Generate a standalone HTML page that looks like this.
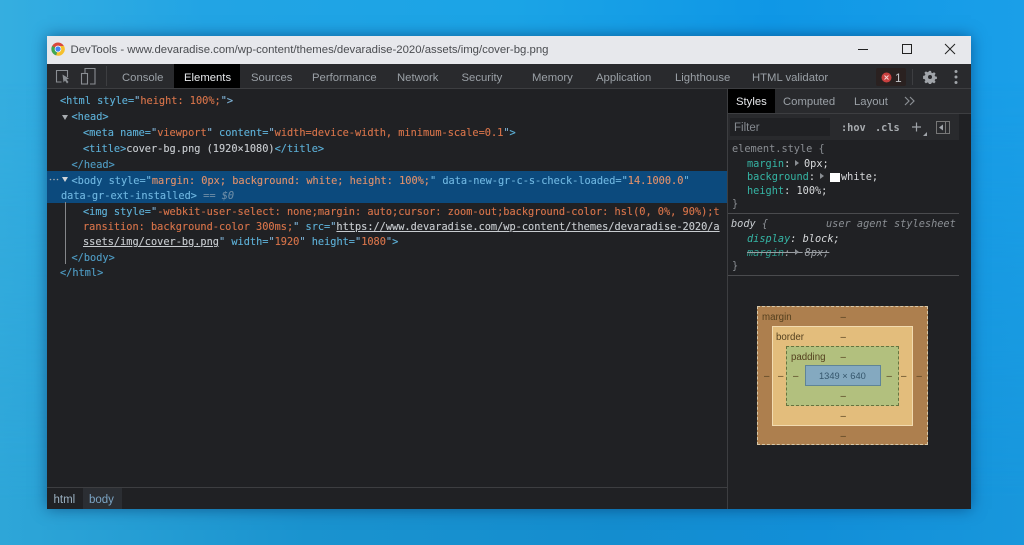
<!DOCTYPE html>
<html><head><meta charset="utf-8"><style>
*{box-sizing:border-box}
html,body{margin:0;padding:0;width:1024px;height:545px;overflow:hidden}
body{position:relative;background:linear-gradient(90deg,#35aee0 0%,#22a4e4 20%,#1ba4e6 50%,#0f97e6 75%,#1a9fe8 100%)}
#bot{position:absolute;left:0;top:0;width:1024px;height:545px;background:linear-gradient(90deg,#2ea6d8 0%,#1a93cf 30%,#148dcf 60%,#128fd8 80%,#1897dc 100%);-webkit-mask-image:linear-gradient(180deg,transparent 15%,#000 92%);mask-image:linear-gradient(180deg,transparent 15%,#000 92%)}
#win{position:absolute;left:47px;top:36px;width:924px;height:473px;background:#202124;box-shadow:0 0 14px rgba(0,40,90,.55);overflow:hidden}
.a{position:absolute;white-space:pre}
#tb{position:absolute;left:0;top:0;width:924px;height:28px;background:#e7e8ec}
#tbar{position:absolute;left:0;top:28px;width:924px;height:25px;background:#292a2d;border-bottom:1px solid #3d3e41}
.t{position:absolute;font:11.3px "Liberation Sans",sans-serif;color:#9aa0a6;white-space:pre;top:34.5px;line-height:14px}
.c{position:absolute;left:0;font:10.27px/14px "DejaVu Sans Mono",monospace;white-space:pre;color:#5db0d7;filter:blur(.25px);-webkit-text-stroke:.12px currentColor}
.o{color:#d8744a}.g{color:#9aa0a6}.b{color:#c8ccd0}.l{color:#7fb2d6}
.s{position:absolute;font:10.27px/13px "DejaVu Sans Mono",monospace;white-space:pre;color:#d8dadc;filter:blur(.2px)}
.k{color:#35b5a5}
.bm{position:absolute;font:9.7px/11px "Liberation Sans",sans-serif;color:#54401f;white-space:pre}
</style></head><body>
<div id="bot"></div>
<div id="win">
<div id="tb"></div>
<svg class="a" style="left:4px;top:6px" width="14" height="14" viewBox="0 0 16 16"><circle cx="8" cy="8" r="7.5" fill="#d9483b"/><path d="M8 8L1.3 4.500A7.500 7.500 0 0 0 6 15.300Z" fill="#3ea853"/><path d="M8 8L6 15.300A7.500 7.500 0 0 0 14.800 4.500H8Z" fill="#f5c02c"/><circle cx="8" cy="8" r="3.800" fill="#fff"/><circle cx="8" cy="8" r="3" fill="#4285f4"/></svg>
<div class="a" style="left:23.500px;top:7px;font:11.370px/15px 'Liberation Sans',sans-serif;color:#4a4c50">DevTools - www.devaradise.com/wp-content/themes/devaradise-2020/assets/img/cover-bg.png</div>
<svg class="a" style="left:810px;top:4px" width="105" height="20" fill="none" stroke="#222" stroke-width="1"><path d="M1 9.500H11"/><rect x="45.500" y="4.500" width="9" height="9"/><path d="M88 4L98 14M98 4L88 14"/></svg>
<div id="tbar"></div>
<svg class="a" style="left:8px;top:32px" width="42" height="18" fill="none" stroke="#8a8e93" stroke-width="1.100"><path d="M12.500 9V2.500H1.500V14H6.500"/><path d="M7.500 6.500L14 10.500L11.500 11.500L13.500 14L12 15.500L10 12.500L8.500 14.500Z" fill="#8a8e93" stroke="none"/><rect x="26.500" y="5.500" width="6" height="10.500"/><path d="M30 5V.5H40V16H35"/></svg>
<div class="a" style="left:59px;top:30px;width:1px;height:20px;background:#3d3e41"></div>
<div class="a" style="left:127px;top:28px;width:66px;height:24px;background:#000"></div>
<div class="t" style="left:75px">Console</div>
<div class="t" style="left:137px;color:#e8eaed">Elements</div>
<div class="t" style="left:204px">Sources</div>
<div class="t" style="left:265px">Performance</div>
<div class="t" style="left:350px">Network</div>
<div class="t" style="left:414.500px">Security</div>
<div class="t" style="left:485px">Memory</div>
<div class="t" style="left:549px">Application</div>
<div class="t" style="left:628px">Lighthouse</div>
<div class="t" style="left:705px">HTML validator</div>
<div class="a" style="left:829px;top:32px;width:30px;height:18px;background:#2a2120;border-radius:2px"></div>
<svg class="a" style="left:834px;top:35.500px" width="11" height="11"><circle cx="5.500" cy="5.500" r="5" fill="#c9403f"/><path d="M3.500 3.500L7.500 7.500M7.500 3.500L3.500 7.500" stroke="#f5d5d5" stroke-width="1"/></svg>
<div class="t" style="left:848px;color:#c4c7cb;font-size:12px">1</div>
<div class="a" style="left:865px;top:33px;width:1px;height:16px;background:#3d3e41"></div>
<svg class="a" style="left:876px;top:33.500px" width="14" height="14" viewBox="0 0 16 16"><path d="M6.800 1h2.400l.4 2 1.300.6 1.800-1.100 1.700 1.700-1.100 1.800.6 1.300 2 .4v2.400l-2 .4-.6 1.300 1.100 1.800-1.700 1.700-1.800-1.100-1.300.6-.4 2H6.800l-.4-2-1.300-.6-1.800 1.100-1.700-1.700 1.100-1.800-.6-1.300-2-.4V6.700l2-.4.6-1.300-1.100-1.800 1.700-1.700 1.800 1.100 1.300-.6z" fill="#a0a4a9"/><circle cx="8" cy="8" r="2.300" fill="#292a2d"/></svg>
<svg class="a" style="left:906px;top:33px" width="6" height="16" fill="#a0a4a9"><circle cx="3" cy="2.500" r="1.500"/><circle cx="3" cy="8" r="1.500"/><circle cx="3" cy="13.500" r="1.500"/></svg>

<div class="a" style="left:0;top:135px;width:680px;height:32px;background:#0c4a7d"></div>
<div class="a" style="left:18px;top:166px;width:1px;height:62px;background:#85878a"></div>
<div class="c" style="top:58px;left:13px"><span>&lt;html style=</span><span class="l">"</span><span class="o">height: 100%;</span><span class="l">"&gt;</span></div>
<div class="c" style="top:74px;left:24.500px">&lt;head&gt;</div>
<div class="c" style="top:90px;left:36px">&lt;meta name=<span class="l">"</span><span class="o">viewport</span><span class="l">"</span> content=<span class="l">"</span><span class="o">width=device-width, minimum-scale=0.1</span><span class="l">"</span>&gt;</div>
<div class="c" style="top:106px;left:36px">&lt;title&gt;<span class="b">cover-bg.png (1920×1080)</span>&lt;/title&gt;</div>
<div class="c" style="top:122px;left:24.500px;color:#4f9cc4">&lt;/head&gt;</div>
<div class="c" style="top:138px;left:24.500px;color:#6fb6e0">&lt;body style=<span>"</span><span style="color:#e0906a">margin: 0px; background: white; height: 100%;</span>" data-new-gr-c-s-check-loaded="<span style="color:#e0906a">14.1000.0</span>"</div>
<div class="c" style="top:153px;left:14px;color:#6fb6e0">data-gr-ext-installed&gt; <span style="color:#6c8ca6">== <i>$0</i></span></div>
<div class="c" style="top:169px;left:36px">&lt;img style=<span class="l">"</span><span class="o">-webkit-user-select: none;margin: auto;cursor: zoom-out;background-color: hsl(0, 0%, 90%);t</span></div>
<div class="c" style="top:184px;left:36px"><span class="o">ransition: background-color 300ms;</span><span class="l">"</span> src=<span class="l">"</span><span class="b" style="text-decoration:underline">https://www.devaradise.com/wp-content/themes/devaradise-2020/a</span></div>
<div class="c" style="top:199px;left:36px"><span class="b" style="text-decoration:underline">ssets/img/cover-bg.png</span><span class="l">"</span> width=<span class="l">"</span><span class="o">1920</span><span class="l">"</span> height=<span class="l">"</span><span class="o">1080</span><span class="l">"</span>&gt;</div>
<div class="c" style="top:215px;left:24.500px;color:#4f9cc4">&lt;/body&gt;</div>
<div class="c" style="top:230px;left:13px;color:#4f9cc4">&lt;/html&gt;</div>
<svg class="a" style="left:0;top:76px" width="30" height="120" fill="#a8acb0"><path d="M15 3H21L18 8Z"/><path d="M15 65H21L18 70Z" fill="#d0d4d8"/><circle cx="3.500" cy="67.500" r=".8"/><circle cx="7" cy="67.500" r=".8"/><circle cx="10.500" cy="67.500" r=".8"/></svg>

<div class="a" style="left:0;top:451px;width:680px;height:1px;background:#3d3e41"></div>
<div class="a" style="left:36px;top:452px;width:39px;height:21px;background:#2b2e33"></div>
<div class="a" style="left:6.500px;top:457px;font:11.500px/14px 'Liberation Sans',sans-serif;color:#9ab0c0">html</div>
<div class="a" style="left:42px;top:457px;font:11.500px/14px 'Liberation Sans',sans-serif;color:#7ba4c4">body</div>

<div class="a" style="left:680px;top:53px;width:244px;height:420px;background:#202124;border-left:1px solid #3d3e41"></div>
<div class="a" style="left:681px;top:53px;width:243px;height:25px;background:#292a2d;border-bottom:1px solid #3d3e41"></div>
<div class="a" style="left:681px;top:53px;width:47px;height:24px;background:#000"></div>
<div class="t" style="top:59px;left:689px;color:#e8eaed">Styles</div>
<div class="t" style="top:59px;left:736px">Computed</div>
<div class="t" style="top:59px;left:807px">Layout</div>
<svg class="a" style="left:857px;top:60px" width="12" height="10" fill="none" stroke="#8a8e93" stroke-width="1.200"><path d="M1 1L5 5L1 9M6 1L10 5L6 9"/></svg>
<div class="a" style="left:681px;top:78px;width:231px;height:26px;background:#292a2d"></div>
<div class="a" style="left:683px;top:82px;width:100px;height:18px;background:#202124"></div>
<div class="a" style="left:687px;top:85px;font:11.500px/14px 'Liberation Sans',sans-serif;color:#858a90">Filter</div>
<div class="s" style="left:794px;top:85.500px;font-weight:bold;color:#a8acb0">:hov</div>
<div class="s" style="left:828px;top:85.500px;font-weight:bold;color:#a8acb0">.cls</div>
<svg class="a" style="left:864px;top:84px" width="46" height="20" fill="none" stroke="#a0a4a9" stroke-width="1.200"><path d="M1 7H10M5.500 2.500V11.500"/><path d="M12 16H16V12Z" fill="#a0a4a9" stroke="none"/><rect x="25.500" y="1.500" width="13" height="12" stroke-width="1" stroke="#777"/><path d="M34.500 1.500V13.500" stroke-width="1" stroke="#777"/><path d="M32 4.500V10.500L28 7.500Z" fill="#a0a4a9" stroke="none"/></svg>

<div class="s" style="left:685px;top:107px;color:#8a8e93">element.style {</div>
<div class="s" style="left:700px;top:122px"><span class="k">margin</span>:</div>
<div class="s" style="left:757px;top:122px">0px;</div>
<div class="s" style="left:700px;top:135px"><span class="k">background</span>:</div>
<div class="s" style="left:794px;top:135px">white;</div>
<div class="s" style="left:700px;top:149px"><span class="k">height</span>: 100%;</div>
<div class="s" style="left:685px;top:162px;color:#8a8e93">}</div>
<svg class="a" style="left:740px;top:119px" width="60" height="32" fill="#8a8e93"><path d="M8 5L12 8L8 11Z"/><path d="M33 18L37 21L33 24Z"/></svg>
<div class="a" style="left:783px;top:136.500px;width:10px;height:9.500px;background:#fff"></div>
<div class="a" style="left:681px;top:177px;width:231px;height:1px;background:#4a4b4e"></div>
<div class="s" style="left:684px;top:182px;font-style:italic;color:#c8ccd0">body <span style="color:#8a8e93">{</span></div>
<div class="s" style="left:779px;top:182px;font-style:italic;color:#8a8e93">user agent stylesheet</div>
<div class="s" style="left:700px;top:197px;font-style:italic"><span class="k">display</span>: block;</div>
<div class="s" style="left:700px;top:211px;font-style:italic;color:#9a9ea3;text-decoration:line-through"><span style="color:#2f9a8c">margin</span>:  <span style="margin-left:2px">8px;</span></div>
<svg class="a" style="left:748px;top:212px" width="6" height="10" fill="#8a8e93"><path d="M0 1L4 4L0 7Z"/></svg>
<div class="s" style="left:685px;top:224px;color:#8a8e93">}</div>
<div class="a" style="left:681px;top:239px;width:231px;height:1px;background:#4a4b4e"></div>

<div class="a" style="left:710px;top:270px;width:171px;height:139px;background:#ad7f4e;border:1px dashed #d8c8a8"></div>
<div class="a" style="left:725px;top:290px;width:141px;height:100px;background:#e3bd7c;border:1px solid #f2dbb0"></div>
<div class="a" style="left:739px;top:310px;width:113px;height:60px;background:#b2c07e;border:1px dashed #66733f"></div>
<div class="a" style="left:758px;top:329px;width:76px;height:21px;background:#84a9c0;border:1px solid #5f8497"></div>
<div class="bm" style="left:715px;top:276px">margin</div>
<div class="bm" style="left:729px;top:296px">border</div>
<div class="bm" style="left:744px;top:316px">padding</div>
<div class="bm" style="left:772px;top:335px;color:#35566c;font-size:9.3px">1349 × 640</div>
<div class="bm" style="left:793.500px;top:276px">–</div><div class="bm" style="left:793.500px;top:296px">–</div><div class="bm" style="left:793.500px;top:316px">–</div>
<div class="bm" style="left:793.500px;top:355px">–</div><div class="bm" style="left:793.500px;top:375px">–</div><div class="bm" style="left:793.500px;top:395px">–</div>
<div class="bm" style="left:717px;top:335px">–</div><div class="bm" style="left:731px;top:335px">–</div><div class="bm" style="left:746px;top:335px">–</div>
<div class="bm" style="left:839.500px;top:335px">–</div><div class="bm" style="left:854px;top:335px">–</div><div class="bm" style="left:869.500px;top:335px">–</div>
</div>
</body></html>
